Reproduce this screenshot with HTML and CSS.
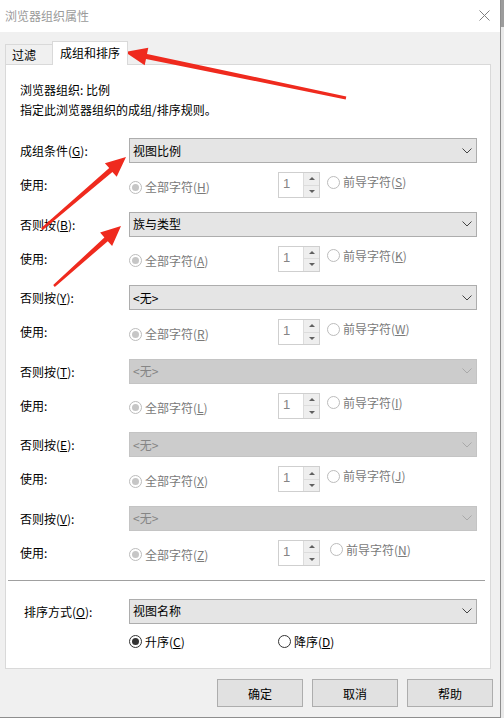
FILE: index.html
```html
<!DOCTYPE html>
<html lang="zh-CN">
<head>
<meta charset="utf-8">
<title>浏览器组织属性</title>
<link rel="stylesheet" href="styles.css">
</head>
<body>
<div class="dialog">
  <div class="titlebar">
    <span class="title">浏览器组织属性</span>
    <svg class="close" width="11" height="11" viewBox="0 0 11 11"><path d="M0.5 0.5 L10.5 10.5 M10.5 0.5 L0.5 10.5" stroke="#808080" stroke-width="1" fill="none"/></svg>
  </div>
  <div class="tabstrip">
    <div class="tab">过滤</div>
    <div class="tab active">成组和排序</div>
  </div>
  <div class="panel">
    <div class="panel-top">
      <div class="intro">浏览器组织: 比例</div>
      <div class="intro">指定此浏览器组织的成组/排序规则。</div>

      <div class="groups">
        <div class="group">
          <div class="combo-row">
            <span class="label">成组条件(<u>G</u>):</span>
            <div class="combo"><span>视图比例</span><svg class="chev" width="10" height="6" viewBox="0 0 10 6"><path d="M0.5 0.5 L5 5 L9.5 0.5" fill="none" stroke="#444" stroke-width="1"/></svg></div>
          </div>
          <div class="use-row">
            <span class="label use-label">使用:</span>
            <span class="radio all"><i class="dot checked"></i>全部字符(<u>H</u>)</span>
            <span class="spin"><span class="spin-val">1</span><span class="spin-btns"><b class="up"></b><b class="down"></b></span></span>
            <span class="radio lead"><i class="dot"></i>前导字符(<u>S</u>)</span>
          </div>
        </div>

        <div class="group">
          <div class="combo-row">
            <span class="label">否则按(<u>B</u>):</span>
            <div class="combo"><span>族与类型</span><svg class="chev" width="10" height="6" viewBox="0 0 10 6"><path d="M0.5 0.5 L5 5 L9.5 0.5" fill="none" stroke="#444" stroke-width="1"/></svg></div>
          </div>
          <div class="use-row">
            <span class="label use-label">使用:</span>
            <span class="radio all"><i class="dot checked"></i>全部字符(<u>A</u>)</span>
            <span class="spin"><span class="spin-val">1</span><span class="spin-btns"><b class="up"></b><b class="down"></b></span></span>
            <span class="radio lead"><i class="dot"></i>前导字符(<u>K</u>)</span>
          </div>
        </div>

        <div class="group">
          <div class="combo-row">
            <span class="label">否则按(<u>Y</u>):</span>
            <div class="combo"><span>&lt;无&gt;</span><svg class="chev" width="10" height="6" viewBox="0 0 10 6"><path d="M0.5 0.5 L5 5 L9.5 0.5" fill="none" stroke="#444" stroke-width="1"/></svg></div>
          </div>
          <div class="use-row">
            <span class="label use-label">使用:</span>
            <span class="radio all"><i class="dot checked"></i>全部字符(<u>R</u>)</span>
            <span class="spin"><span class="spin-val">1</span><span class="spin-btns"><b class="up"></b><b class="down"></b></span></span>
            <span class="radio lead"><i class="dot"></i>前导字符(<u>W</u>)</span>
          </div>
        </div>

        <div class="group">
          <div class="combo-row">
            <span class="label">否则按(<u>T</u>):</span>
            <div class="combo disabled"><span>&lt;无&gt;</span><svg class="chev" width="10" height="6" viewBox="0 0 10 6"><path d="M0.5 0.5 L5 5 L9.5 0.5" fill="none" stroke="#a9a9a9" stroke-width="1"/></svg></div>
          </div>
          <div class="use-row">
            <span class="label use-label">使用:</span>
            <span class="radio all"><i class="dot checked"></i>全部字符(<u>L</u>)</span>
            <span class="spin"><span class="spin-val">1</span><span class="spin-btns"><b class="up"></b><b class="down"></b></span></span>
            <span class="radio lead"><i class="dot"></i>前导字符(<u>I</u>)</span>
          </div>
        </div>

        <div class="group">
          <div class="combo-row">
            <span class="label">否则按(<u>E</u>):</span>
            <div class="combo disabled"><span>&lt;无&gt;</span><svg class="chev" width="10" height="6" viewBox="0 0 10 6"><path d="M0.5 0.5 L5 5 L9.5 0.5" fill="none" stroke="#a9a9a9" stroke-width="1"/></svg></div>
          </div>
          <div class="use-row">
            <span class="label use-label">使用:</span>
            <span class="radio all"><i class="dot checked"></i>全部字符(<u>X</u>)</span>
            <span class="spin"><span class="spin-val">1</span><span class="spin-btns"><b class="up"></b><b class="down"></b></span></span>
            <span class="radio lead"><i class="dot"></i>前导字符(<u>J</u>)</span>
          </div>
        </div>

        <div class="group">
          <div class="combo-row">
            <span class="label">否则按(<u>V</u>):</span>
            <div class="combo disabled"><span>&lt;无&gt;</span><svg class="chev" width="10" height="6" viewBox="0 0 10 6"><path d="M0.5 0.5 L5 5 L9.5 0.5" fill="none" stroke="#a9a9a9" stroke-width="1"/></svg></div>
          </div>
          <div class="use-row">
            <span class="label use-label">使用:</span>
            <span class="radio all"><i class="dot checked"></i>全部字符(<u>Z</u>)</span>
            <span class="spin"><span class="spin-val">1</span><span class="spin-btns"><b class="up"></b><b class="down"></b></span></span>
            <span class="radio lead lead-last"><i class="dot"></i>前导字符(<u>N</u>)</span>
          </div>
        </div>
      </div>
    </div>

    <div class="sep"></div>

    <div class="sort">
      <div class="combo-row">
        <span class="label sort-label">排序方式(<u>O</u>):</span>
        <div class="combo"><span>视图名称</span><svg class="chev" width="10" height="6" viewBox="0 0 10 6"><path d="M0.5 0.5 L5 5 L9.5 0.5" fill="none" stroke="#444" stroke-width="1"/></svg></div>
      </div>
      <div class="order-row">
        <span class="radio on asc"><i class="dot checked"></i>升序(<u>C</u>)</span>
        <span class="radio on"><i class="dot"></i>降序(<u>D</u>)</span>
      </div>
    </div>
  </div>

  <div class="buttons">
    <button class="btn">确定</button>
    <button class="btn">取消</button>
    <button class="btn">帮助</button>
  </div>
</div>
<div class="edge"></div>

<svg class="marks" width="504" height="721" viewBox="0 0 504 721">
  <polygon fill="#ef2a1e" points="125,52 148.3,47.7 147.0,54.1 346.3,96.5 345.7,99.5 146.0,58.9 144.7,65.3"/>
  <polygon fill="#ef2a1e" points="126,157 104.9,163.2 109.2,168.1 41.2,228.1 42.8,229.9 112.4,171.9 116.7,176.8"/>
  <polygon fill="#ef2a1e" points="121,226 100.1,232.6 104.4,237.4 53.2,285.1 54.8,286.9 107.8,241.2 112.1,246.0"/>
</svg>
</body>
</html>
```

FILE: styles.css
```css
* { box-sizing: border-box; }

html, body {
  margin: 0;
  padding: 0;
  background: #ffffff;
}

body {
  position: relative;
  display: flex;
  align-items: flex-start;
  width: 504px;
  height: 721px;
  overflow: hidden;
  font-family: "Noto Sans CJK SC", "Noto Sans", sans-serif;
  font-size: 12px;
  line-height: 16px;
  color: #000;
}

u { text-decoration: underline; text-underline-offset: 1px; }

.dialog {
  width: 501px;
  height: 718px;
  flex: none;
  display: flex;
  flex-direction: column;
  background: #f0f0f0;
  border-right: 1px solid #8e8e8e;
  border-bottom: 1px solid #8e8e8e;
}

.edge {
  width: 3px;
  height: 718px;
  flex: none;
  background: linear-gradient(#9c9c9c 0, #9c9c9c 27px, #e9e9e9 27px, #e9e9e9 100%);
}

.titlebar {
  height: 32px;
  flex: none;
  background: #ffffff;
  display: flex;
  align-items: center;
  justify-content: space-between;
  padding: 0 10px 0 5px;
}

.title {
  color: #9a9a9a;
  font-size: 12px;
}

.close { display: block; margin-top: -1px; }

.tabstrip {
  display: flex;
  align-items: flex-end;
  margin: 9px 0 0 5px;
  height: 24px;
  position: relative;
  z-index: 1;
  margin-bottom: -1px;
}

.tab {
  height: 20px;
  width: 47px;
  border: 1px solid #d9d9d9;
  border-right: none;
  border-bottom: none;
  background: #f0f0f0;
  padding-left: 6px;
  line-height: 20px;
  margin-bottom: 1px;
}

.tab.active {
  width: 76px;
  height: 24px;
  margin-bottom: 0;
  border-right: 1px solid #d9d9d9;
  background: #ffffff;
  padding-left: 7px;
  line-height: 22px;
}

.panel {
  margin-left: 5px;
  width: 486px;
  height: 605px;
  flex: none;
  background: #ffffff;
  border: 1px solid #d9d9d9;
}

.panel-top {
  padding: 15px 0 0 14px;
}

.intro {
  line-height: 20px;
}

.groups {
  margin-top: 18px;
  display: flex;
  flex-direction: column;
  gap: 13.6px;
}

.combo-row {
  display: flex;
  align-items: center;
  height: 25px;
}

.label {
  width: 109px;
  flex: none;
  padding-top: 1px;
}

.combo {
  width: 348px;
  height: 25px;
  border: 1px solid #adadad;
  background: #e5e5e5;
  display: flex;
  align-items: center;
  justify-content: space-between;
  padding: 0 4px 0 3px;
}

.combo.disabled {
  background: #cccccc;
  border-color: #c4c4c4;
  color: #858585;
}

.chev { display: block; }

.use-row {
  margin-top: 9px;
  height: 26px;
  display: flex;
  align-items: flex-start;
}

.use-label { margin-top: 4px; }

.radio {
  display: flex;
  align-items: center;
  color: #7a7a7a;
  height: 16px;
}

.radio .dot {
  width: 13px;
  height: 13px;
  border: 1px solid #bcbcbc;
  border-radius: 50%;
  background: #ffffff;
  margin-right: 3px;
  flex: none;
  display: flex;
  align-items: center;
  justify-content: center;
}

.radio .dot.checked::after {
  content: "";
  width: 7px;
  height: 7px;
  border-radius: 50%;
  background: #c6c6c6;
}

.radio.all {
  width: 149px;
  flex: none;
  margin-top: 7px;
}

.radio.lead {
  margin-left: 7px;
  margin-top: 2px;
}

.radio.lead-last { margin-left: 10px; }

.spin {
  width: 42px;
  height: 26px;
  flex: none;
  border: 1px solid #cfcfcf;
  background: #ffffff;
  display: flex;
}

.spin-val {
  width: 24px;
  padding: 3px 0 0 4px;
  color: #858585;
  font-family: "Liberation Sans", sans-serif;
  font-size: 13px;
}

.spin-btns {
  width: 16px;
  display: flex;
  flex-direction: column;
  border-left: 1px solid #dcdcdc;
}

.spin-btns b {
  flex: 1;
  background: #eeeeee;
  display: flex;
  align-items: center;
  justify-content: center;
}

.spin-btns b.up { border-bottom: 1px solid #dcdcdc; }

.spin-btns b.up::after {
  content: "";
  border-left: 3px solid transparent;
  border-right: 3px solid transparent;
  border-bottom: 3px solid #606060;
}

.spin-btns b.down::after {
  content: "";
  border-left: 3px solid transparent;
  border-right: 3px solid transparent;
  border-top: 3px solid #606060;
}

.sep {
  margin: 14px 0 0 2px;
  width: 477px;
  height: 1px;
  background: #a0a0a0;
}

.sort {
  padding: 18px 0 0 18px;
}

.sort-label { width: 105px; }

.order-row {
  margin: 10px 0 0 105px;
  display: flex;
}

.radio.on { color: #000; }

.radio.on .dot { border-color: #333333; }

.radio.on .dot.checked::after {
  background: #333333;
  width: 7px;
  height: 7px;
}

.radio.asc { width: 149px; flex: none; }

.buttons {
  display: flex;
  justify-content: flex-end;
  gap: 9px;
  padding-right: 7px;
  margin-top: 10px;
}

.btn {
  width: 86px;
  height: 28px;
  border: 1px solid #adadad;
  background: #e1e1e1;
  font-family: "Noto Sans CJK SC", sans-serif;
  font-size: 12px;
  color: #000;
  padding: 0;
}

.marks {
  position: absolute;
  left: 0;
  top: 0;
  pointer-events: none;
}
```
